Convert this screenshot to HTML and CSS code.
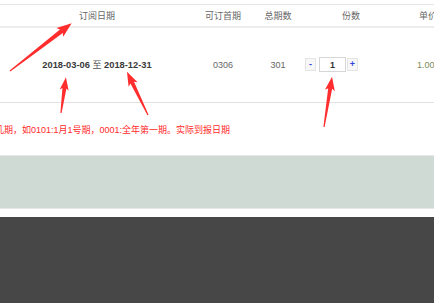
FILE: index.html
```html
<!DOCTYPE html>
<html lang="zh-CN">

<head>
    <meta charset="UTF-8">
    <meta name="viewport" content="width=device-width, initial-scale=1.0">
    <title>订阅</title>
    <link rel="stylesheet" href="styles.css">
</head>

<body>
    <div class="viewport">
        <div class="page">
            <div class="order-table">
                <div class="row head">
                    <div class="cell"></div>
                    <div class="cell">订阅日期</div>
                    <div class="cell">可订首期</div>
                    <div class="cell">总期数</div>
                    <div class="cell">份数</div>
                    <div class="cell">单价</div>
                </div>
                <div class="row body-row">
                    <div class="cell"></div>
                    <div class="cell date">2018-03-06 <span class="to">至</span> 2018-12-31</div>
                    <div class="cell">0306</div>
                    <div class="cell">301</div>
                    <div class="cell qty">
                        <div class="spinner">
                            <button class="btn">-</button>
                            <input class="count" type="text" value="1">
                            <button class="btn">+</button>
                        </div>
                    </div>
                    <div class="cell price">1.00</div>
                </div>
            </div>
            <p class="notice">格式：四位数字，第几期，如0101:1月1号期，0001:全年第一期。实际到报日期</p>
            <div class="band"></div>
            <div class="footer"></div>
        </div>
    </div>

    <svg class="marks" width="434" height="303" viewBox="0 0 434 303">
        <g fill="#ff2d2d">
            <polygon transform="translate(10 71) rotate(-37.75)" points="0,-0.6 65,-2.3 63,-5.5 78,0 63,5.5 65,2.3 0,0.6"></polygon>
            <polygon transform="translate(61 113) rotate(-82.1)" points="0,-0.6 25,-2 23,-4.5 36,0 23,4.5 25,2 0,0.6"></polygon>
            <polygon transform="translate(148 115) rotate(-116)" points="0,-0.6 36,-2 34,-5 48,0 34,5 36,2 0,0.6"></polygon>
            <polygon transform="translate(324 127) rotate(-80.9)" points="0,-0.6 39,-2 37,-5 51,0 37,5 39,2 0,0.6"></polygon>
        </g>
    </svg>
</body>

</html>
```

FILE: styles.css
```css
html,
body {
    margin: 0;
    overflow: hidden;
}

body {
    font-family: 'Liberation Sans', 'Noto Sans CJK SC', sans-serif;
    font-size: 9px;
    color: #666;
    background: #fff;
    position: relative;
    height: 303px;
}

.viewport {
    width: 434px;
    overflow: hidden;
}

.page {
    width: 600px;
    margin-left: -100px;
    padding-top: 4px;
}

.row {
    display: grid;
    grid-template-columns: 100px 194px 58px 52px 94px 60px;
    align-items: center;
}

.cell {
    text-align: center;
}

.head {
    height: 21px;
    border-top: 1px solid #e6e6e6;
    border-bottom: 2px solid #ededed;
}

.body-row {
    height: 73px;
    padding-bottom: 1px;
    border-bottom: 1px solid #e2e2e2;
}

.date {
    font-size: 9.3px;
    font-weight: bold;
    color: #3a3a3a;
}

.date .to {
    font-weight: normal;
    font-size: 9px;
    color: #555;
}

.qty {
    text-align: left;
}

.spinner {
    display: flex;
    align-items: center;
    margin-left: 1px;
}

.btn {
    width: 11px;
    height: 13px;
    padding: 0;
    margin: 0;
    border: 1px solid #e4e4e4;
    background: #f7f7f7;
    color: #3344dd;
    font-family: 'Liberation Sans', sans-serif;
    font-size: 9px;
    font-weight: bold;
    line-height: 11px;
}

.count {
    width: 27px;
    height: 15px;
    box-sizing: border-box;
    margin: 0 1px 0 3px;
    padding: 0;
    border: 1px solid #d6d6d6;
    text-align: center;
    font-family: 'Liberation Sans', sans-serif;
    font-size: 9px;
    font-weight: bold;
    color: #333;
}

.price {
    color: #7a8a5c;
    text-align: left;
    padding-left: 19px;
}

.notice {
    margin: 0;
    padding: 21px 0 19px 14px;
    line-height: 12px;
    color: #ff2a2a;
    white-space: nowrap;
}

.band {
    height: 52px;
    background: #d0dad5;
    border-top: 1px solid #e8e6e6;
    border-bottom: 1px solid #e4e8e6;
}

.footer {
    margin-top: 8px;
    height: 100px;
    background: #474747;
}

.marks {
    position: absolute;
    top: 0;
    left: 0;
    pointer-events: none;
}
```
